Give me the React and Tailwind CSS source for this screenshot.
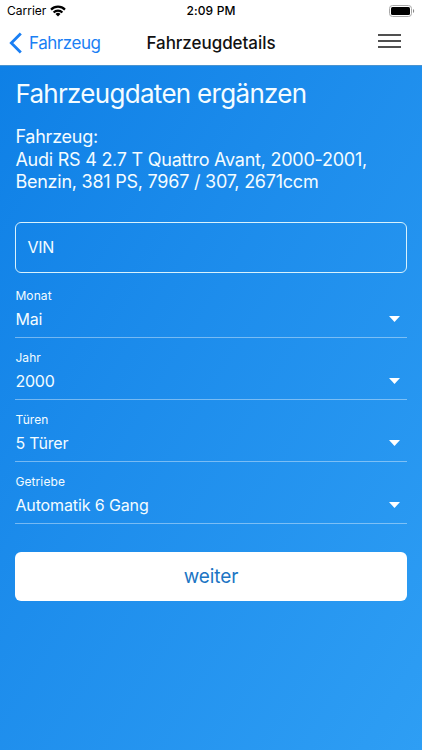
import React, { useState } from 'react';

const fields = [
  { id: 'month', label: 'Monat', value: 'Mai', spacing: 'tracking-[-0.2px]' },
  { id: 'year', label: 'Jahr', value: '2000', spacing: 'tracking-[-0.2px]' },
  { id: 'doors', label: 'Türen', value: '5 Türer', spacing: 'tracking-[-0.2px]' },
  { id: 'gearbox', label: 'Getriebe', value: 'Automatik 6 Gang', spacing: 'tracking-[-0.12px]' },
];

const StatusBar = () => (
  <div className="flex h-[21px] items-center px-[7px] text-[12px] text-black">
    <div className="flex flex-1 items-center gap-1">
      <span>Carrier</span>
      <svg width="16" height="12" viewBox="0 0 16 12" fill="none" stroke="black" strokeWidth="2.2">
        <path d="M1 4.6a9.9 9.9 0 0 1 14 0" />
        <path d="M3.6 7.4a6.2 6.2 0 0 1 8.8 0" />
        <path d="M8 11.6 5.5 9.1a3.5 3.5 0 0 1 5 0z" fill="black" stroke="none" />
      </svg>
    </div>
    <span className="font-medium tracking-[0.15px]">2:09 PM</span>
    <div className="flex flex-1 justify-end">
      <svg width="26" height="12" viewBox="0 0 26 12">
        <rect x="0.5" y="0.5" width="22" height="11" rx="3" fill="white" stroke="#a8a8a8" />
        <rect x="2" y="2" width="19" height="8" rx="1.5" fill="black" />
        <path d="M24 4v4c1.6-.6 1.6-3.4 0-4z" fill="#8a8a8a" />
      </svg>
    </div>
  </div>
);

const NavBar = () => (
  <header className="flex h-[45px] items-center border-b border-[#4a94d0] bg-white">
    <div className="flex flex-1">
      <button type="button" className="ml-[9px] flex items-center gap-[7px] text-[#1a7ff4]">
        <svg width="13" height="22" viewBox="0 0 13 22" fill="none" stroke="currentColor" strokeWidth="2.8">
          <path d="M11.8 1.4 2.3 11l9.5 9.6" />
        </svg>
        <span className="text-[17px] leading-[22px] tracking-[-0.45px]">Fahrzeug</span>
      </button>
    </div>
    <h1 className="text-[17px] leading-[22px] font-[550] tracking-[-0.05px] text-[#111]">
      Fahrzeugdetails
    </h1>
    <div className="flex flex-1 justify-end pb-1">
      <button type="button" aria-label="Menü" className="mr-[21px] flex flex-col gap-1">
        <span className="h-[2px] w-[23px] bg-[#505050]" />
        <span className="h-[2px] w-[23px] bg-[#505050]" />
        <span className="h-[2px] w-[23px] bg-[#505050]" />
      </button>
    </div>
  </header>
);

const SelectRow = ({ label, value, spacing }) => (
  <div className="flex h-[62px] flex-col border-b border-white/40 pt-3">
    <span className="text-[12px] leading-4 tracking-[0.1px]">{label}</span>
    <div className="mt-[3px] flex items-center justify-between pr-[7px]">
      <span className={`text-[16px] leading-6 ${spacing}`}>{value}</span>
      <svg width="11" height="6" viewBox="0 0 11 6" fill="white">
        <path d="M0 0h11L5.5 6z" />
      </svg>
    </div>
  </div>
);

const App = () => {
  const [vin, setVin] = useState('');

  return (
    <div className="flex h-[750px] w-[422px] flex-col overflow-hidden bg-white font-['Inter',sans-serif]">
      <StatusBar />
      <NavBar />
      <main className="flex-1 bg-linear-to-br from-[#0e80e6] to-[#2e9ef4] px-[15.4px] pt-3 text-[#f4fcff]">
        <h2 className="text-[26px] leading-8 font-[370] tracking-[-0.7px]">Fahrzeugdaten ergänzen</h2>
        <p className="mt-4 text-[18px] leading-[22.5px] font-[380] tracking-[-0.24px]">
          Fahrzeug:
          <br />
          Audi RS 4 2.7 T Quattro Avant, 2000-2001,
          <br />
          Benzin, 381 PS, 7967 / 307, 2671ccm
        </p>
        <input
          type="text"
          placeholder="VIN"
          value={vin}
          onChange={(e) => setVin(e.target.value)}
          className="mt-[28.5px] block h-[51px] w-full rounded-md border border-[#d8f2fd] px-[11px] pb-px text-[16px] tracking-[-0.3px] placeholder:text-[#f4fcff] placeholder:opacity-100"
        />
        <div className="mt-[3px]">
          {fields.map((field) => (
            <SelectRow key={field.id} {...field} />
          ))}
        </div>
        <button
          type="button"
          className="mt-7 block h-[49px] w-full rounded-md bg-white pt-px text-[19px] tracking-[-0.1px] text-[#1c75c4]"
        >
          weiter
        </button>
      </main>
    </div>
  );
};

export default App;
